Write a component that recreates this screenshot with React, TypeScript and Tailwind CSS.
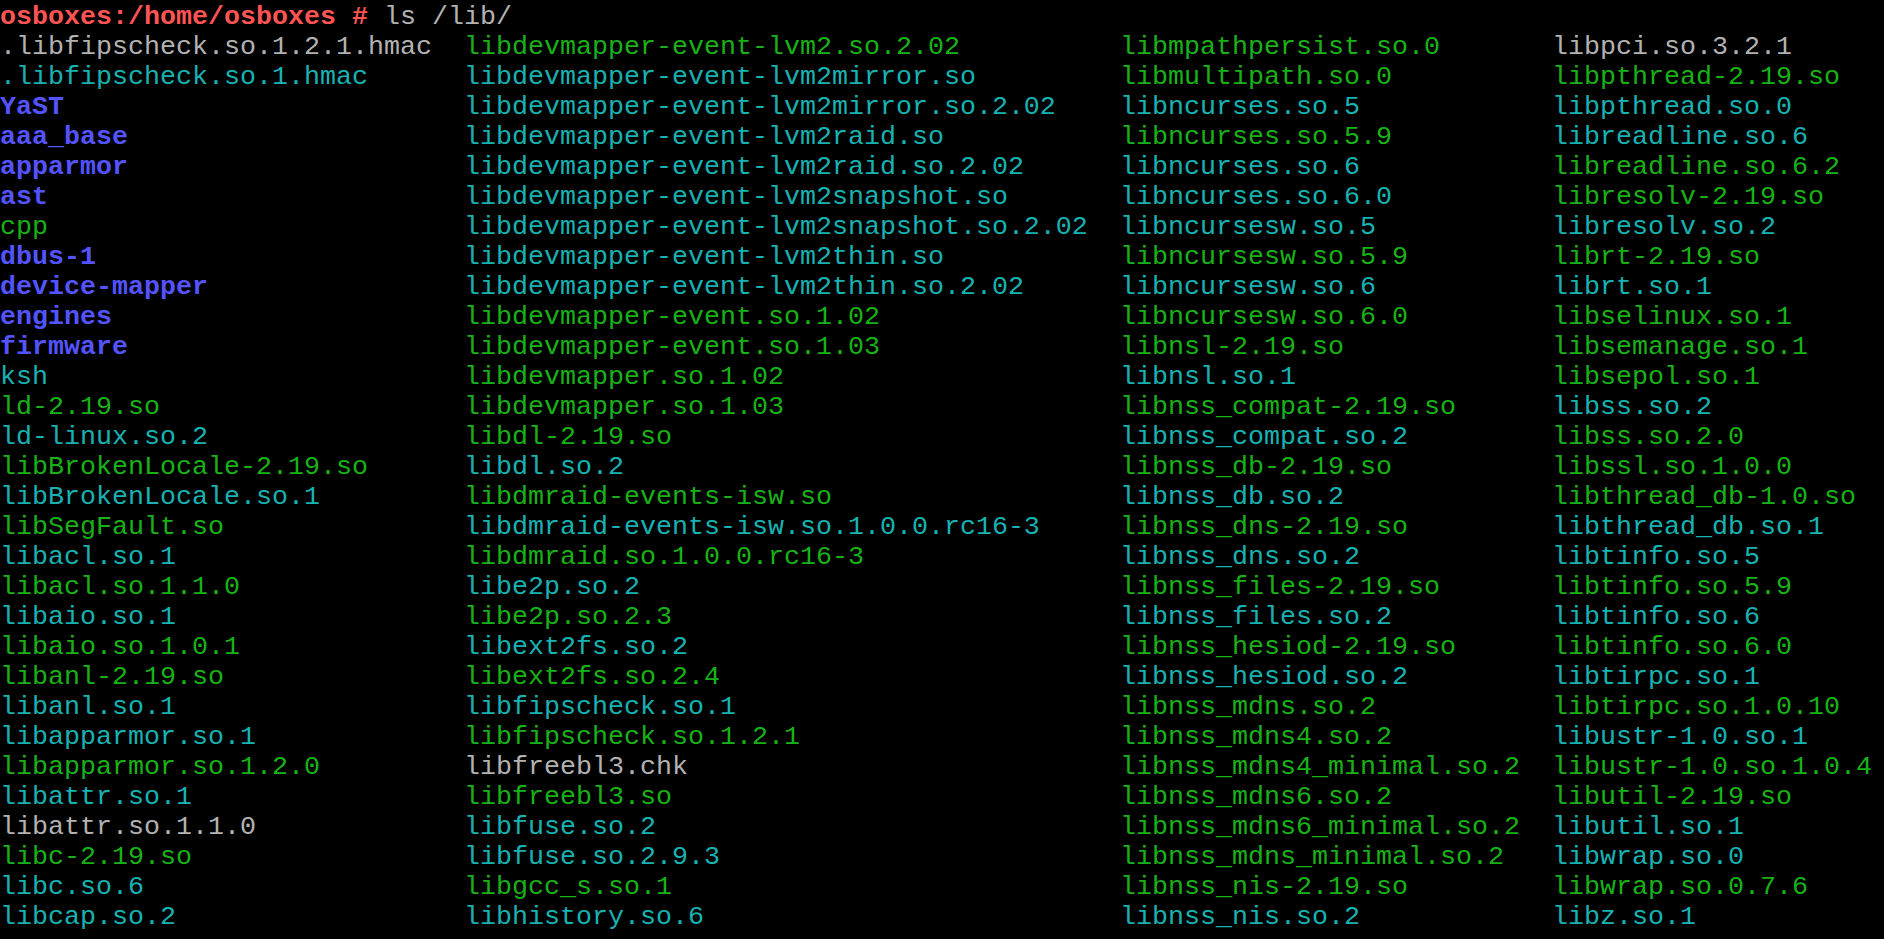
import React from "react";

type C = "g" | "c" | "w" | "b";

const col1: [string, C][] = [
  [".libfipscheck.so.1.2.1.hmac", "w"],
  [".libfipscheck.so.1.hmac", "c"],
  ["YaST", "b"],
  ["aaa_base", "b"],
  ["apparmor", "b"],
  ["ast", "b"],
  ["cpp", "g"],
  ["dbus-1", "b"],
  ["device-mapper", "b"],
  ["engines", "b"],
  ["firmware", "b"],
  ["ksh", "c"],
  ["ld-2.19.so", "g"],
  ["ld-linux.so.2", "c"],
  ["libBrokenLocale-2.19.so", "g"],
  ["libBrokenLocale.so.1", "c"],
  ["libSegFault.so", "g"],
  ["libacl.so.1", "c"],
  ["libacl.so.1.1.0", "g"],
  ["libaio.so.1", "c"],
  ["libaio.so.1.0.1", "g"],
  ["libanl-2.19.so", "g"],
  ["libanl.so.1", "c"],
  ["libapparmor.so.1", "c"],
  ["libapparmor.so.1.2.0", "g"],
  ["libattr.so.1", "c"],
  ["libattr.so.1.1.0", "w"],
  ["libc-2.19.so", "g"],
  ["libc.so.6", "c"],
  ["libcap.so.2", "c"],
];

const col2: [string, C][] = [
  ["libdevmapper-event-lvm2.so.2.02", "g"],
  ["libdevmapper-event-lvm2mirror.so", "c"],
  ["libdevmapper-event-lvm2mirror.so.2.02", "c"],
  ["libdevmapper-event-lvm2raid.so", "c"],
  ["libdevmapper-event-lvm2raid.so.2.02", "c"],
  ["libdevmapper-event-lvm2snapshot.so", "c"],
  ["libdevmapper-event-lvm2snapshot.so.2.02", "c"],
  ["libdevmapper-event-lvm2thin.so", "c"],
  ["libdevmapper-event-lvm2thin.so.2.02", "c"],
  ["libdevmapper-event.so.1.02", "g"],
  ["libdevmapper-event.so.1.03", "g"],
  ["libdevmapper.so.1.02", "g"],
  ["libdevmapper.so.1.03", "g"],
  ["libdl-2.19.so", "g"],
  ["libdl.so.2", "c"],
  ["libdmraid-events-isw.so", "g"],
  ["libdmraid-events-isw.so.1.0.0.rc16-3", "c"],
  ["libdmraid.so.1.0.0.rc16-3", "g"],
  ["libe2p.so.2", "c"],
  ["libe2p.so.2.3", "g"],
  ["libext2fs.so.2", "c"],
  ["libext2fs.so.2.4", "g"],
  ["libfipscheck.so.1", "c"],
  ["libfipscheck.so.1.2.1", "g"],
  ["libfreebl3.chk", "w"],
  ["libfreebl3.so", "g"],
  ["libfuse.so.2", "c"],
  ["libfuse.so.2.9.3", "c"],
  ["libgcc_s.so.1", "g"],
  ["libhistory.so.6", "c"],
];

const col3: [string, C][] = [
  ["libmpathpersist.so.0", "g"],
  ["libmultipath.so.0", "g"],
  ["libncurses.so.5", "c"],
  ["libncurses.so.5.9", "g"],
  ["libncurses.so.6", "c"],
  ["libncurses.so.6.0", "c"],
  ["libncursesw.so.5", "c"],
  ["libncursesw.so.5.9", "g"],
  ["libncursesw.so.6", "c"],
  ["libncursesw.so.6.0", "g"],
  ["libnsl-2.19.so", "g"],
  ["libnsl.so.1", "c"],
  ["libnss_compat-2.19.so", "g"],
  ["libnss_compat.so.2", "c"],
  ["libnss_db-2.19.so", "g"],
  ["libnss_db.so.2", "c"],
  ["libnss_dns-2.19.so", "g"],
  ["libnss_dns.so.2", "c"],
  ["libnss_files-2.19.so", "g"],
  ["libnss_files.so.2", "c"],
  ["libnss_hesiod-2.19.so", "g"],
  ["libnss_hesiod.so.2", "c"],
  ["libnss_mdns.so.2", "g"],
  ["libnss_mdns4.so.2", "g"],
  ["libnss_mdns4_minimal.so.2", "g"],
  ["libnss_mdns6.so.2", "g"],
  ["libnss_mdns6_minimal.so.2", "g"],
  ["libnss_mdns_minimal.so.2", "g"],
  ["libnss_nis-2.19.so", "g"],
  ["libnss_nis.so.2", "c"],
];

const col4: [string, C][] = [
  ["libpci.so.3.2.1", "w"],
  ["libpthread-2.19.so", "g"],
  ["libpthread.so.0", "c"],
  ["libreadline.so.6", "c"],
  ["libreadline.so.6.2", "g"],
  ["libresolv-2.19.so", "g"],
  ["libresolv.so.2", "c"],
  ["librt-2.19.so", "g"],
  ["librt.so.1", "c"],
  ["libselinux.so.1", "g"],
  ["libsemanage.so.1", "g"],
  ["libsepol.so.1", "g"],
  ["libss.so.2", "c"],
  ["libss.so.2.0", "g"],
  ["libssl.so.1.0.0", "g"],
  ["libthread_db-1.0.so", "g"],
  ["libthread_db.so.1", "c"],
  ["libtinfo.so.5", "c"],
  ["libtinfo.so.5.9", "g"],
  ["libtinfo.so.6", "c"],
  ["libtinfo.so.6.0", "g"],
  ["libtirpc.so.1", "c"],
  ["libtirpc.so.1.0.10", "g"],
  ["libustr-1.0.so.1", "c"],
  ["libustr-1.0.so.1.0.4", "g"],
  ["libutil-2.19.so", "g"],
  ["libutil.so.1", "c"],
  ["libwrap.so.0", "c"],
  ["libwrap.so.0.7.6", "g"],
  ["libz.so.1", "c"],
];

const cls: Record<C, string> = {
  g: "text-[#18b218]",
  c: "text-[#18b2b2]",
  w: "text-[#b2b2b2]",
  b: "text-[#5454ff] font-bold",
};

function Col({ items, w }: { items: [string, C][]; w: string }) {
  return (
    <div className={`flex flex-col shrink-0 ${w}`}>
      {items.map(([t, c], i) => (
        <div key={i} className={`h-[30px] whitespace-pre ${cls[c]}`}>
          {t}
        </div>
      ))}
    </div>
  );
}

export default function App() {
  return (
    <div
      className="w-[1884px] h-[939px] bg-black overflow-hidden pt-[2px] text-[26.67px] leading-[30px]"
      style={{ fontFamily: '"Liberation Mono", "DejaVu Sans Mono", monospace' }}
    >
      <div className="h-[30px] whitespace-pre">
        <span className="text-[#ff5454] font-bold">osboxes:/home/osboxes #</span>
        <span className="text-[#b2b2b2]"> ls /lib/</span>
      </div>
      <div className="flex">
        <Col items={col1} w="w-[464px]" />
        <Col items={col2} w="w-[656px]" />
        <Col items={col3} w="w-[432px]" />
        <Col items={col4} w="w-[332px]" />
      </div>
    </div>
  );
}
